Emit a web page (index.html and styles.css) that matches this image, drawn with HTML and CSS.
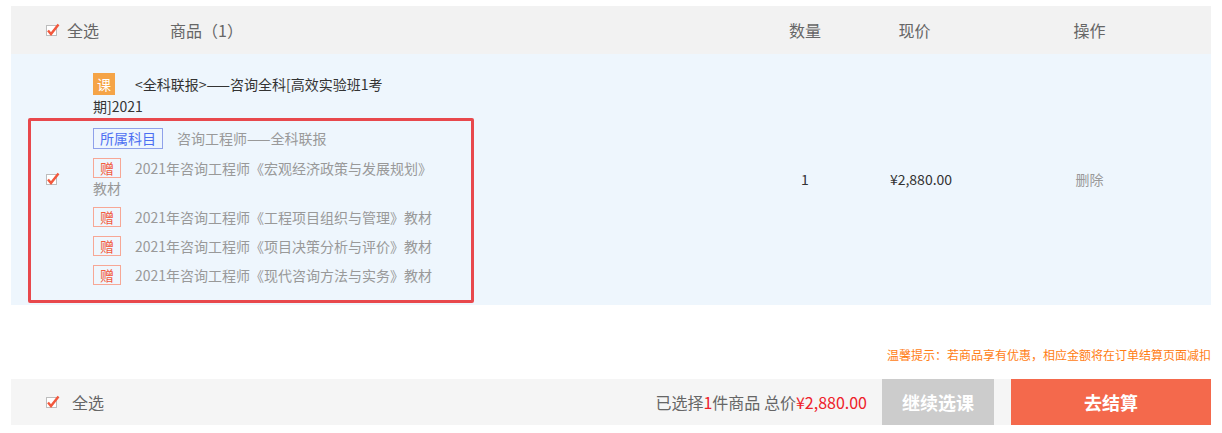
FILE: index.html
```html
<!DOCTYPE html>
<html>
<head>
  <title>购物车</title>
  <meta charset="UTF-8">
  <meta name="viewport" content="width=device-width, initial-scale=1.0">
  <link rel="stylesheet" href="styles.css">
</head>
<body>
  <div class="cart">
    <!-- 表头 -->
    <div class="cart-head cols">
      <div class="cell-check">
        <svg class="checkbox" width="16" height="16" viewBox="0 0 16 16"><rect x="1.5" y="3.5" width="10" height="10" fill="#fff" stroke="#bdbdbd"/><path d="M3 8.5 L6 12 L13.5 2.5" fill="none" stroke="#f2583d" stroke-width="2.4"/></svg>
        <span class="label">全选</span>
      </div>
      <div class="head-product">商品（1）</div>
      <div class="center">数量</div>
      <div class="center head-price">现价</div>
      <div class="center">操作</div>
    </div>

    <!-- 商品行 -->
    <div class="cart-row cols">
      <div class="cell-check middle">
        <svg class="checkbox" width="16" height="16" viewBox="0 0 16 16"><rect x="1.5" y="3.5" width="10" height="10" fill="#fff" stroke="#bdbdbd"/><path d="M3 8.5 L6 12 L13.5 2.5" fill="none" stroke="#f2583d" stroke-width="2.4"/></svg>
      </div>
      <div class="product">
        <div class="title"><span class="badge-course">课</span>&lt;全科联报&gt;——咨询全科[高效实验班1考期]2021</div>
        <div class="gifts">
          <div class="gift"><span class="tag-subject">所属科目</span>咨询工程师——全科联报</div>
          <div class="gift"><span class="tag-gift">赠</span>2021年咨询工程师《宏观经济政策与发展规划》教材</div>
          <div class="gift"><span class="tag-gift">赠</span>2021年咨询工程师《工程项目组织与管理》教材</div>
          <div class="gift"><span class="tag-gift">赠</span>2021年咨询工程师《项目决策分析与评价》教材</div>
          <div class="gift"><span class="tag-gift">赠</span>2021年咨询工程师《现代咨询方法与实务》教材</div>
        </div>
      </div>
      <div class="center middle qty">1</div>
      <div class="center middle price">¥2,880.00</div>
      <div class="center middle"><a class="delete">删除</a></div>
      <div class="highlight"></div>
    </div>

    <p class="tip">温馨提示：若商品享有优惠，相应金额将在订单结算页面减扣</p>

    <!-- 结算栏 -->
    <div class="cart-foot">
      <div class="foot-check">
        <svg class="checkbox" width="16" height="16" viewBox="0 0 16 16"><rect x="1.5" y="3.5" width="10" height="10" fill="#fff" stroke="#bdbdbd"/><path d="M3 8.5 L6 12 L13.5 2.5" fill="none" stroke="#f2583d" stroke-width="2.4"/></svg>
        <span class="label">全选</span>
      </div>
      <div class="summary">已选择<span class="red">1</span>件商品 总价<span class="red">¥2,880.00</span></div>
      <button class="btn-more">继续选课</button>
      <button class="btn-pay">去结算</button>
    </div>
  </div>
</body>
</html>
```

FILE: styles.css
```css
body {
  margin: 0;
  font-family: "Noto Sans CJK SC", sans-serif;
  color: #333;
  background: #fff;
}
.cart {
  width: 1200px;
  margin-left: 11px;
  padding-top: 6px;
}
.cols {
  display: grid;
  grid-template-columns: 82px 647px 130px 98px 243px;
}
.center {
  text-align: center;
}
.middle {
  align-self: center;
}
.checkbox {
  display: block;
  flex: none;
}
.cell-check {
  display: flex;
  align-items: center;
  padding-left: 34px;
  white-space: nowrap;
}
.cart-head {
  height: 48px;
  align-items: center;
  background-color: #f2f2f2;
  font-size: 16px;
  color: #666;
}
.cart-head .label {
  margin-left: 6px;
}
.head-product {
  padding-left: 77px;
}
.head-price {
  padding-right: 9px;
}
.cart-row {
  position: relative;
  background-color: #eef6fd;
  padding: 19px 0 20px;
  font-size: 14px;
}
.title {
  width: 306px;
  line-height: 22px;
  color: #333;
}
.badge-course {
  display: inline-block;
  width: 22px;
  height: 22px;
  margin-right: 20px;
  vertical-align: top;
  background-color: #f5a447;
  color: #fff;
  text-align: center;
}
.gifts {
  width: 350px;
  margin-top: 11px;
  color: #999;
}
.gift {
  line-height: 20px;
  margin-bottom: 9px;
}
.gift:last-child {
  margin-bottom: 0;
}
.tag-subject {
  display: inline-block;
  box-sizing: border-box;
  height: 21px;
  line-height: 19px;
  padding: 0 6px;
  margin-right: 14px;
  border: 1px solid #8fa1ea;
  color: #4d6ff2;
  vertical-align: top;
}
.tag-gift {
  display: inline-block;
  box-sizing: border-box;
  width: 28px;
  height: 20px;
  line-height: 18px;
  margin-right: 14px;
  border: 1px solid #f7a795;
  color: #f25a3c;
  text-align: center;
  vertical-align: top;
}
.qty, .price {
  color: #333;
}
.price {
  padding-left: 4px;
}
.delete {
  color: #999;
  cursor: pointer;
}
.highlight {
  position: absolute;
  left: 17px;
  top: 64px;
  width: 440px;
  height: 179px;
  border: 3px solid #e8484c;
  border-radius: 2px;
  pointer-events: none;
}
.tip {
  margin: 40px 0 14px;
  font-size: 12px;
  line-height: 20px;
  color: #ff7d14;
  text-align: right;
}
.cart-foot {
  display: flex;
  align-items: center;
  height: 46px;
  background-color: #f5f5f5;
}
.foot-check {
  display: flex;
  align-items: center;
  padding-left: 34px;
  font-size: 16px;
  color: #666;
}
.foot-check .label {
  margin-left: 11px;
}
.summary {
  margin-left: auto;
  margin-right: 15px;
  font-size: 16px;
  color: #666;
}
.red {
  color: #ee2129;
}
.cart-foot button {
  height: 46px;
  border: none;
  font-family: inherit;
  font-size: 18px;
  font-weight: bold;
  color: #fff;
  cursor: pointer;
}
.btn-more {
  width: 112px;
  background-color: #cccccc;
}
.btn-pay {
  width: 200px;
  margin-left: 17px;
  background-color: #f4694c;
}
```
